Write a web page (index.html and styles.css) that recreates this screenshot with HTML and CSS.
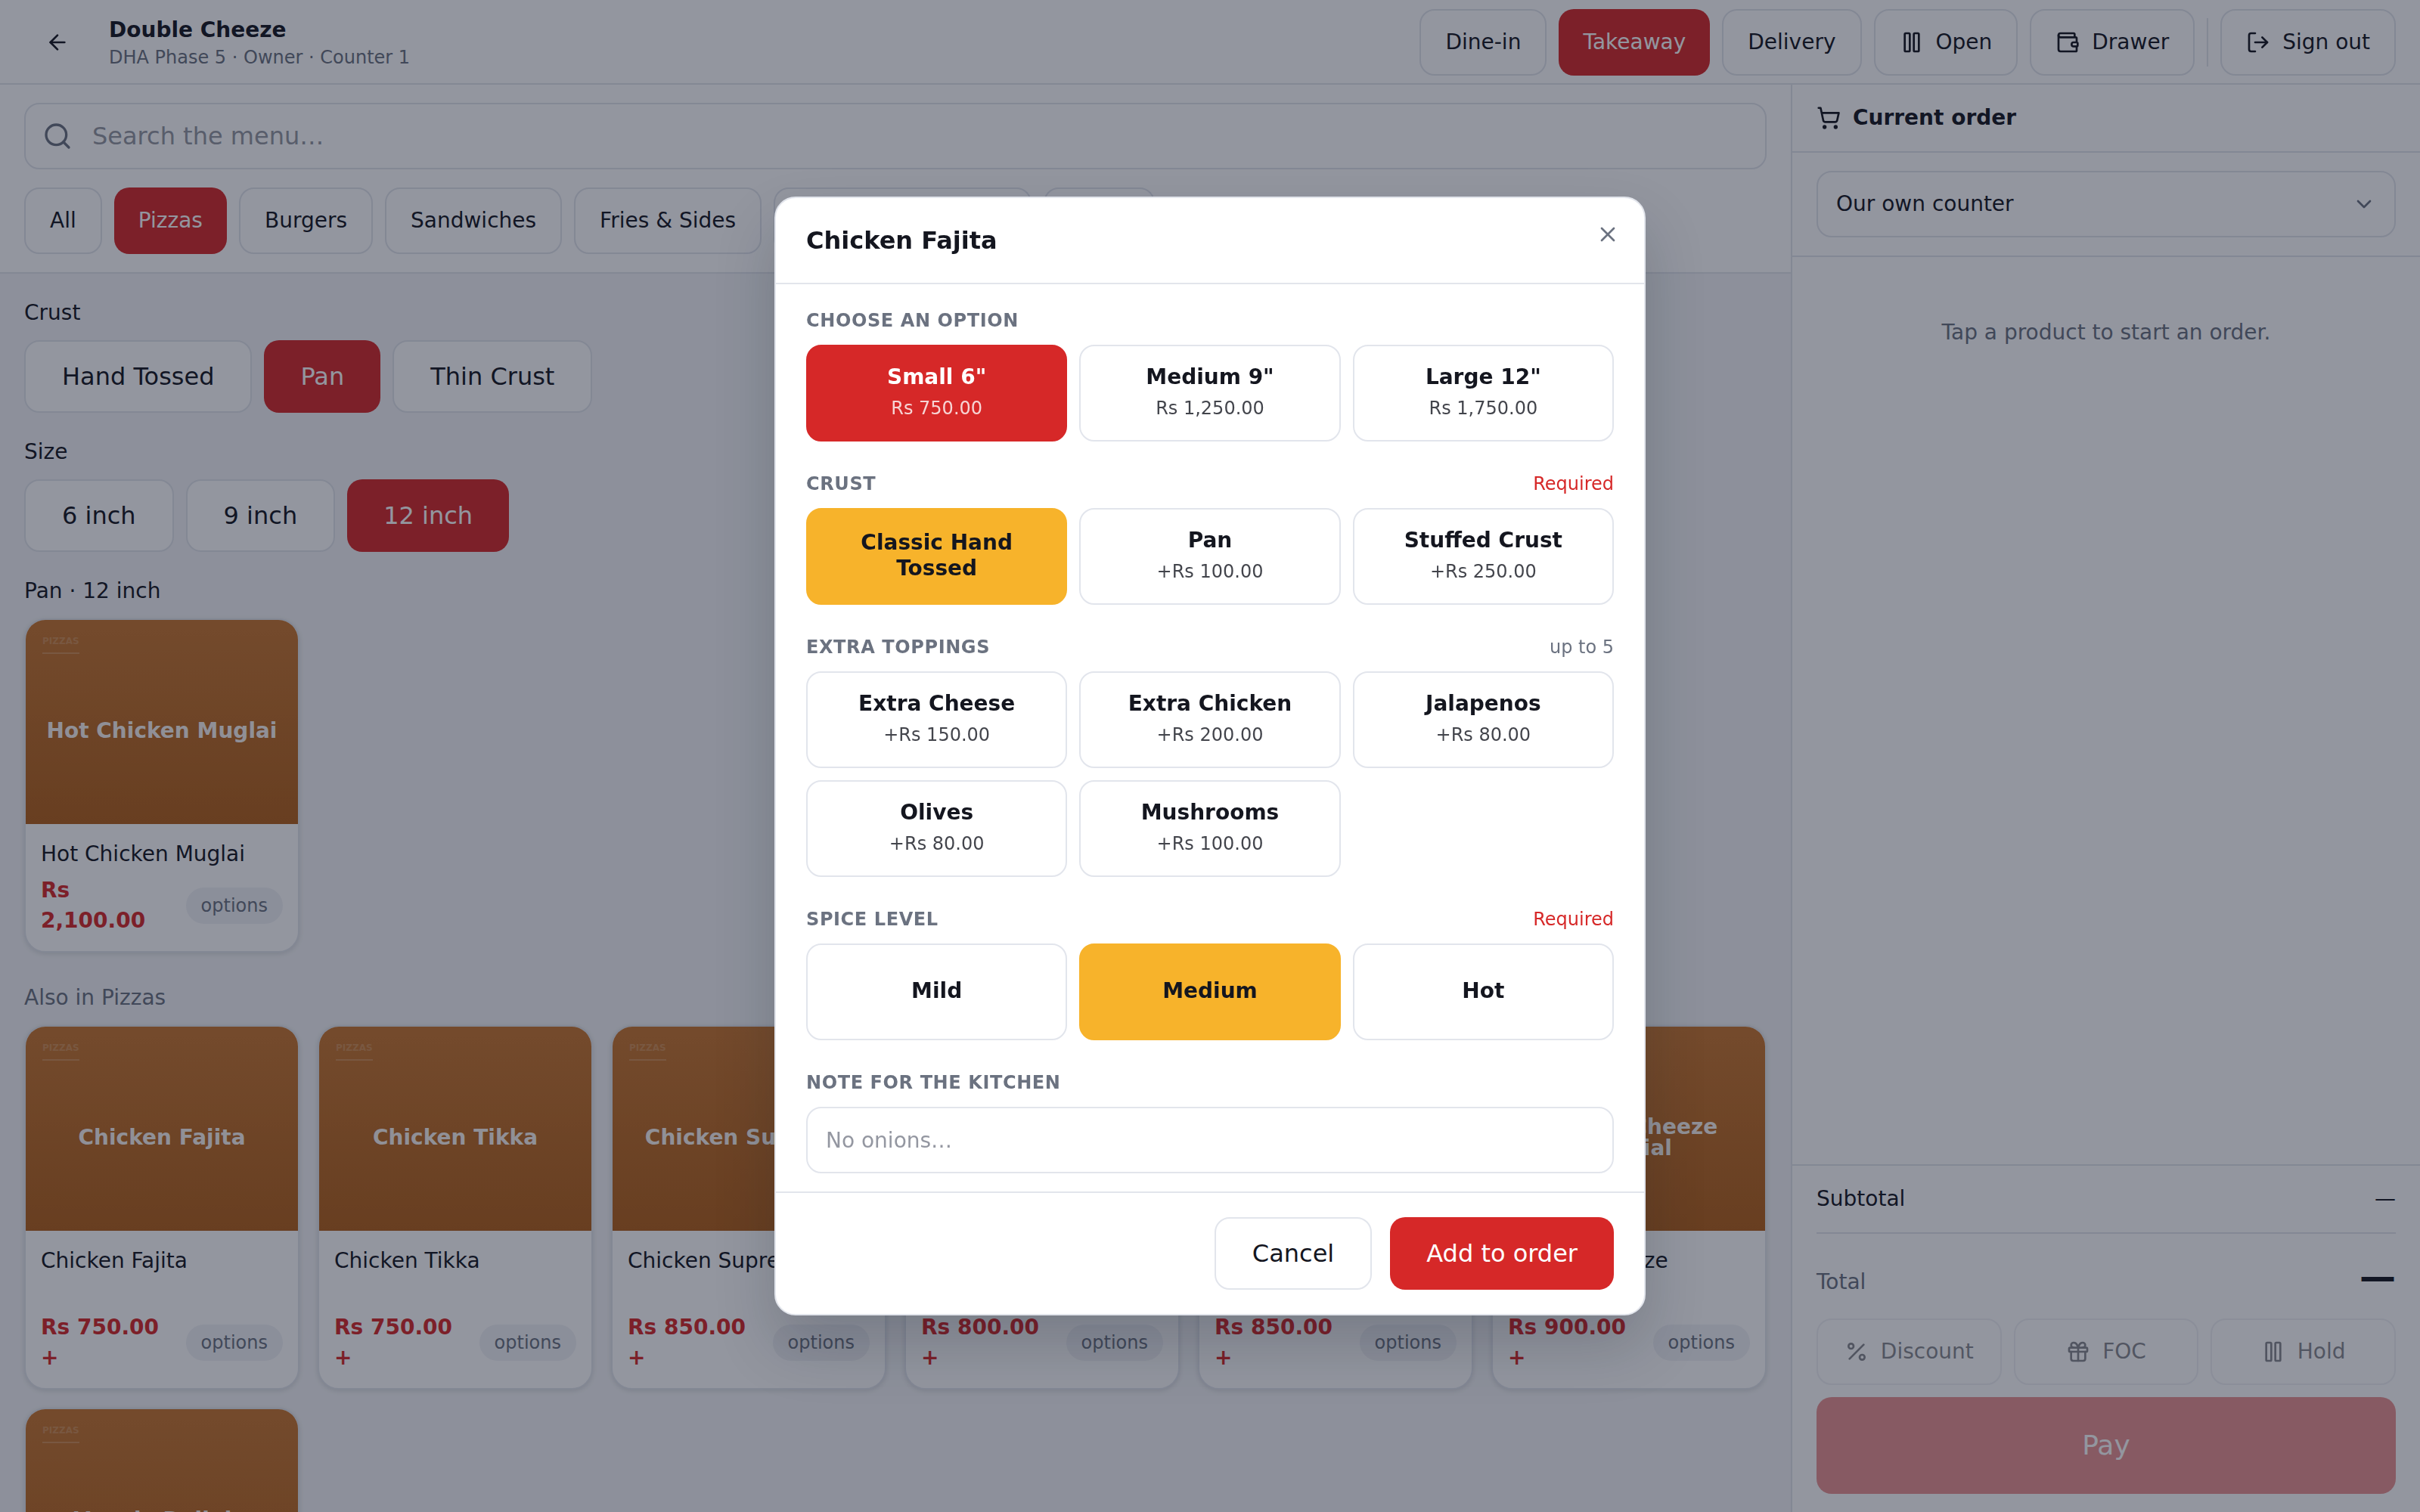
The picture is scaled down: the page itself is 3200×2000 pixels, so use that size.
FILE: index.html
```html
<!DOCTYPE html>
<html lang="en">
<head>
  <meta charset="UTF-8">
  <meta name="viewport" content="width=device-width, initial-scale=1">
  <title>Double Cheeze - Counter</title>
  <link rel="stylesheet" href="styles.css">
</head>
<body>

  <!-- icons -->
  <svg class="sprite" aria-hidden="true">
    <symbol id="i-back" viewBox="0 0 24 24"><path d="m12 19-7-7 7-7"/><path d="M19 12H5"/></symbol>
    <symbol id="i-pause" viewBox="0 0 24 24"><rect x="14" y="3" width="5" height="18" rx="1"/><rect x="5" y="3" width="5" height="18" rx="1"/></symbol>
    <symbol id="i-wallet" viewBox="0 0 24 24"><path d="M19 7V4a1 1 0 0 0-1-1H5a2 2 0 0 0 0 4h15a1 1 0 0 1 1 1v4h-3a2 2 0 0 0 0 4h3a1 1 0 0 0 1-1v-2a1 1 0 0 0-1-1"/><path d="M3 5v14a2 2 0 0 0 2 2h15a1 1 0 0 0 1-1v-4"/></symbol>
    <symbol id="i-out" viewBox="0 0 24 24"><path d="m16 17 5-5-5-5"/><path d="M21 12H9"/><path d="M9 21H5a2 2 0 0 1-2-2V5a2 2 0 0 1 2-2h4"/></symbol>
    <symbol id="i-search" viewBox="0 0 24 24"><circle cx="11" cy="11" r="8"/><path d="m21 21-4.34-4.34"/></symbol>
    <symbol id="i-cart" viewBox="0 0 24 24"><circle cx="8" cy="21" r="1"/><circle cx="19" cy="21" r="1"/><path d="M2.05 2.05h2l2.66 12.42a2 2 0 0 0 2 1.58h9.78a2 2 0 0 0 1.95-1.57l1.65-7.43H5.12"/></symbol>
    <symbol id="i-down" viewBox="0 0 24 24"><path d="m6 9 6 6 6-6"/></symbol>
    <symbol id="i-percent" viewBox="0 0 24 24"><path d="M19 5 5 19"/><circle cx="6.5" cy="6.5" r="2.5"/><circle cx="17.5" cy="17.5" r="2.5"/></symbol>
    <symbol id="i-gift" viewBox="0 0 24 24"><rect x="3" y="8" width="18" height="4" rx="1"/><path d="M12 8v13"/><path d="M19 12v7a2 2 0 0 1-2 2H7a2 2 0 0 1-2-2v-7"/><path d="M7.5 8a2.5 2.5 0 0 1 0-5A4.8 8 0 0 1 12 8a4.8 8 0 0 1 4.5-5 2.5 2.5 0 0 1 0 5"/></symbol>
    <symbol id="i-close" viewBox="0 0 24 24"><path d="M18 6 6 18"/><path d="m6 6 12 12"/></symbol>
  </svg>

  <div class="app">
    <header class="topbar">
      <button class="btn-ghost" aria-label="Back"><svg class="icon"><use href="#i-back"/></svg></button>
      <div class="brand">
        <h1>Double Cheeze</h1>
        <p>DHA Phase 5 · Owner · Counter 1</p>
      </div>
      <div class="actions">
        <button class="btn">Dine-in</button>
        <button class="btn primary">Takeaway</button>
        <button class="btn">Delivery</button>
        <button class="btn"><svg class="icon"><use href="#i-pause"/></svg>Open</button>
        <button class="btn"><svg class="icon"><use href="#i-wallet"/></svg>Drawer</button>
        <span class="divider"></span>
        <button class="btn"><svg class="icon"><use href="#i-out"/></svg>Sign out</button>
      </div>
    </header>

    <div class="columns">
      <main class="menu">
        <div class="filters">
          <div class="search">
            <svg class="icon"><use href="#i-search"/></svg>
            <input type="text" placeholder="Search the menu…" aria-label="Search the menu">
          </div>
          <nav class="row">
            <button class="btn">All</button>
            <button class="btn primary">Pizzas</button>
            <button class="btn">Burgers</button>
            <button class="btn">Sandwiches</button>
            <button class="btn">Fries &amp; Sides</button>
            <button class="btn">Appetizers &amp; Wings</button>
            <button class="btn">Deals</button>
          </nav>
        </div>

        <div class="products">
          <section>
            <h2>Crust</h2>
            <div class="row">
              <button class="btn large">Hand Tossed</button>
              <button class="btn large primary">Pan</button>
              <button class="btn large">Thin Crust</button>
            </div>
          </section>
          <section>
            <h2>Size</h2>
            <div class="row">
              <button class="btn large">6 inch</button>
              <button class="btn large">9 inch</button>
              <button class="btn large primary">12 inch</button>
            </div>
          </section>
          <section>
            <h2>Pan · 12 inch</h2>
            <div class="grid">
              <button class="card">
                <span class="tile"><span class="tag">PIZZAS</span><span class="tile-name">Hot Chicken Muglai</span></span>
                <span class="card-body">
                  <span class="name">Hot Chicken Muglai</span>
                  <span class="card-foot"><span class="price">Rs 2,100.00</span><span class="pill">options</span></span>
                </span>
              </button>
            </div>
          </section>
          <section class="also">
            <h2>Also in Pizzas</h2>
            <div class="grid">
              <button class="card">
                <span class="tile"><span class="tag">PIZZAS</span><span class="tile-name">Chicken Fajita</span></span>
                <span class="card-body">
                  <span class="name">Chicken Fajita</span>
                  <span class="card-foot"><span class="price">Rs 750.00 +</span><span class="pill">options</span></span>
                </span>
              </button>
              <button class="card">
                <span class="tile"><span class="tag">PIZZAS</span><span class="tile-name">Chicken Tikka</span></span>
                <span class="card-body">
                  <span class="name">Chicken Tikka</span>
                  <span class="card-foot"><span class="price">Rs 750.00 +</span><span class="pill">options</span></span>
                </span>
              </button>
              <button class="card">
                <span class="tile"><span class="tag">PIZZAS</span><span class="tile-name">Chicken Supreme</span></span>
                <span class="card-body">
                  <span class="name">Chicken Supreme</span>
                  <span class="card-foot"><span class="price">Rs 850.00 +</span><span class="pill">options</span></span>
                </span>
              </button>
              <button class="card">
                <span class="tile"><span class="tag">PIZZAS</span><span class="tile-name">Cheese Lover</span></span>
                <span class="card-body">
                  <span class="name">Cheese Lover</span>
                  <span class="card-foot"><span class="price">Rs 800.00 +</span><span class="pill">options</span></span>
                </span>
              </button>
              <button class="card">
                <span class="tile"><span class="tag">PIZZAS</span><span class="tile-name">Pepperoni</span></span>
                <span class="card-body">
                  <span class="name">Pepperoni</span>
                  <span class="card-foot"><span class="price">Rs 850.00 +</span><span class="pill">options</span></span>
                </span>
              </button>
              <button class="card">
                <span class="tile"><span class="tag">PIZZAS</span><span class="tile-name">Double Cheeze Special</span></span>
                <span class="card-body">
                  <span class="name">Double Cheeze Special</span>
                  <span class="card-foot"><span class="price">Rs 900.00 +</span><span class="pill">options</span></span>
                </span>
              </button>
              <button class="card">
                <span class="tile"><span class="tag">PIZZAS</span><span class="tile-name">Veggie Delight</span></span>
                <span class="card-body">
                  <span class="name">Veggie Delight</span>
                  <span class="card-foot"><span class="price">Rs 700.00 +</span><span class="pill">options</span></span>
                </span>
              </button>
            </div>
          </section>
        </div>
      </main>

      <aside class="order">
        <h2 class="order-title"><svg class="icon"><use href="#i-cart"/></svg>Current order</h2>
        <div class="channel">
          <div class="select">
            <select aria-label="Order channel">
              <option>Our own counter</option>
            </select>
            <svg class="icon"><use href="#i-down"/></svg>
          </div>
        </div>
        <p class="empty">Tap a product to start an order.</p>
        <div class="totals">
          <div class="subtotal"><span>Subtotal</span><span>—</span></div>
          <div class="total"><span>Total</span><strong>—</strong></div>
          <div class="order-actions">
            <button class="btn" disabled><svg class="icon"><use href="#i-percent"/></svg>Discount</button>
            <button class="btn" disabled><svg class="icon"><use href="#i-gift"/></svg>FOC</button>
            <button class="btn" disabled><svg class="icon"><use href="#i-pause"/></svg>Hold</button>
          </div>
          <button class="btn primary pay" disabled>Pay</button>
        </div>
      </aside>
    </div>
  </div>

  <!-- product options dialog -->
  <div class="overlay">
    <div class="modal" role="dialog" aria-modal="true" aria-labelledby="modalTitle">
      <div class="modal-head">
        <h2 id="modalTitle">Chicken Fajita</h2>
        <button class="close" aria-label="Close"><svg class="icon"><use href="#i-close"/></svg></button>
      </div>
      <div class="modal-body">
        <section>
          <div class="group-head"><h3>CHOOSE AN OPTION</h3></div>
          <div class="options">
            <button class="option red"><b>Small 6"</b><small>Rs 750.00</small></button>
            <button class="option"><b>Medium 9"</b><small>Rs 1,250.00</small></button>
            <button class="option"><b>Large 12"</b><small>Rs 1,750.00</small></button>
          </div>
        </section>
        <section>
          <div class="group-head"><h3>CRUST</h3><span class="required">Required</span></div>
          <div class="options">
            <button class="option amber"><b>Classic Hand Tossed</b></button>
            <button class="option"><b>Pan</b><small>+Rs 100.00</small></button>
            <button class="option"><b>Stuffed Crust</b><small>+Rs 250.00</small></button>
          </div>
        </section>
        <section>
          <div class="group-head"><h3>EXTRA TOPPINGS</h3><span>up to 5</span></div>
          <div class="options">
            <button class="option"><b>Extra Cheese</b><small>+Rs 150.00</small></button>
            <button class="option"><b>Extra Chicken</b><small>+Rs 200.00</small></button>
            <button class="option"><b>Jalapenos</b><small>+Rs 80.00</small></button>
            <button class="option"><b>Olives</b><small>+Rs 80.00</small></button>
            <button class="option"><b>Mushrooms</b><small>+Rs 100.00</small></button>
          </div>
        </section>
        <section>
          <div class="group-head"><h3>SPICE LEVEL</h3><span class="required">Required</span></div>
          <div class="options">
            <button class="option"><b>Mild</b></button>
            <button class="option amber"><b>Medium</b></button>
            <button class="option"><b>Hot</b></button>
          </div>
        </section>
        <section>
          <div class="group-head"><label for="note">NOTE FOR THE KITCHEN</label></div>
          <input class="note" type="text" id="note" placeholder="No onions…">
        </section>
      </div>
      <div class="modal-foot">
        <button class="btn large">Cancel</button>
        <button class="btn large primary">Add to order</button>
      </div>
    </div>
  </div>

</body>
</html>
```
FILE: styles.css
```css
* {
  box-sizing: border-box;
}
body {
  margin: 0;
  font-family: "DejaVu Sans", sans-serif;
  font-size: 28px;
  line-height: 40px;
  color: #14161f;
  background: #f4f5f7;
}
h1, h2, h3, p {
  margin: 0;
  font-size: 28px;
  font-weight: normal;
}
button, input, select {
  font: inherit;
  color: inherit;
  margin: 0;
}
button {
  cursor: pointer;
}
input::placeholder {
  color: #9497a1;
  opacity: 1;
}
.sprite {
  display: none;
}
.icon {
  width: 32px;
  height: 32px;
  flex-shrink: 0;
  fill: none;
  stroke: currentColor;
  stroke-width: 2;
  stroke-linecap: round;
  stroke-linejoin: round;
}

/* buttons */
.btn {
  display: inline-flex;
  align-items: center;
  justify-content: center;
  gap: 16px;
  height: 88px;
  padding: 0 32px;
  background: #fff;
  border: 2px solid #e2e5ec;
  border-radius: 20px;
  white-space: nowrap;
}
.btn.large {
  height: 96px;
  padding: 0 48px;
  font-size: 32px;
}
.btn.primary {
  background: #d62828;
  border: none;
  color: #fff;
}
.btn:disabled {
  opacity: 0.5;
  cursor: default;
}
.btn-ghost {
  display: flex;
  align-items: center;
  justify-content: center;
  width: 88px;
  height: 88px;
  padding: 0;
  background: none;
  border: none;
}

/* page */
.app {
  display: flex;
  flex-direction: column;
  height: 100vh;
  overflow: hidden;
}
.topbar {
  display: flex;
  align-items: center;
  gap: 24px;
  padding: 12px 32px 10px;
  background: #fff;
  border-bottom: 2px solid #e2e5ec;
}
.brand {
  flex: 1;
}
.brand h1 {
  font-weight: bold;
}
.brand p {
  font-size: 24px;
  line-height: 32px;
  color: #6b7280;
}
.actions, .row {
  display: flex;
  align-items: center;
  gap: 16px;
}
.divider {
  width: 2px;
  height: 64px;
  background: #e2e5ec;
}
.columns {
  display: flex;
  flex: 1;
  min-height: 0;
}
.menu {
  display: flex;
  flex-direction: column;
  flex: 1;
  min-width: 0;
}
.filters {
  display: flex;
  flex-direction: column;
  gap: 24px;
  padding: 24px 32px;
  background: #fff;
  border-bottom: 2px solid #e2e5ec;
}
.search {
  position: relative;
}
.search .icon {
  position: absolute;
  left: 24px;
  top: 24px;
  width: 40px;
  height: 40px;
  color: #6b7280;
}
.search input, .note, .select select {
  display: block;
  width: 100%;
  height: 88px;
  padding: 0 24px;
  background: #fff;
  border: 2px solid #e2e5ec;
  border-radius: 20px;
}
.search input {
  padding-left: 88px;
  font-size: 32px;
}
.products {
  display: flex;
  flex-direction: column;
  gap: 32px;
  flex: 1;
  min-height: 0;
  padding: 32px;
  overflow: hidden;
}
.products h2 {
  margin-bottom: 16px;
}
.also {
  margin-top: 8px;
}
.also h2 {
  color: #6b7280;
}

/* product cards */
.grid {
  display: grid;
  grid-template-columns: repeat(auto-fill, minmax(340px, 1fr));
  gap: 24px;
}
.card {
  display: flex;
  flex-direction: column;
  padding: 0;
  background: #fff;
  border: 2px solid #e2e5ec;
  border-radius: 28px;
  box-shadow: 0 2px 6px rgba(15, 23, 42, 0.12);
  overflow: hidden;
  text-align: left;
}
.tile {
  display: flex;
  flex-direction: column;
  align-items: flex-start;
  width: 100%;
  aspect-ratio: 4 / 3;
  padding: 20px 22px 22px;
  background: linear-gradient(#c7762f, #b1601a);
  font-weight: bold;
}
.tag {
  padding-bottom: 7px;
  border-bottom: 2px solid rgba(255, 255, 255, 0.2);
  font-size: 12px;
  line-height: 16px;
  color: rgba(255, 255, 255, 0.2);
}
.tile-name {
  display: flex;
  align-items: center;
  justify-content: center;
  flex: 1;
  width: 100%;
  line-height: 28px;
  text-align: center;
  color: rgba(255, 255, 255, 0.95);
}
.card-body {
  display: flex;
  flex-direction: column;
  justify-content: space-between;
  gap: 8px;
  flex: 1;
  width: 100%;
  padding: 20px;
}
.card-foot {
  display: flex;
  align-items: center;
  justify-content: space-between;
  gap: 16px;
}
.price {
  font-weight: bold;
  color: #d62828;
}
.pill {
  flex-shrink: 0;
  padding: 8px 20px;
  background: #f1f2f6;
  border-radius: 24px;
  font-size: 24px;
  line-height: 32px;
  color: #6b7280;
}

/* order panel */
.order {
  display: flex;
  flex-direction: column;
  width: 26%;
  background: #fff;
  border-left: 2px solid #e2e5ec;
}
.order-title {
  display: flex;
  align-items: center;
  gap: 16px;
  padding: 24px 32px;
  border-bottom: 2px solid #e2e5ec;
  font-weight: bold;
}
.channel {
  padding: 24px 32px;
  border-bottom: 2px solid #e2e5ec;
}
.select {
  position: relative;
}
.select select {
  appearance: none;
}
.select .icon {
  position: absolute;
  right: 26px;
  top: 28px;
  color: #6b7280;
  pointer-events: none;
}
.empty {
  flex: 1;
  padding-top: 80px;
  text-align: center;
  color: #6b7280;
}
.totals {
  padding: 24px 32px;
  border-top: 2px solid #e2e5ec;
}
.subtotal, .total {
  display: flex;
  align-items: baseline;
  justify-content: space-between;
}
.subtotal {
  padding-bottom: 24px;
  border-bottom: 2px solid #e2e5ec;
}
.total {
  padding: 24px 0;
  color: #6b7280;
}
.total strong {
  font-size: 48px;
  line-height: 64px;
  color: #14161f;
}
.order-actions {
  display: grid;
  grid-template-columns: repeat(3, 1fr);
  gap: 16px;
  margin-bottom: 16px;
}
.btn.pay {
  width: 100%;
  height: 128px;
  font-size: 36px;
}

/* modal */
.overlay {
  position: fixed;
  inset: 0;
  display: flex;
  align-items: center;
  justify-content: center;
  background: rgba(15, 23, 42, 0.45);
}
.modal {
  width: 1152px;
  max-width: 90%;
  background: #fff;
  border: 2px solid #e2e5ec;
  border-radius: 28px;
  box-shadow: 0 40px 80px rgba(15, 23, 42, 0.2);
}
.modal-head {
  display: flex;
  align-items: flex-start;
  justify-content: space-between;
  padding: 32px 32px 32px 40px;
  border-bottom: 2px solid #e2e5ec;
}
.modal-head h2 {
  font-size: 32px;
  line-height: 48px;
  font-weight: bold;
}
.close {
  display: flex;
  padding: 0;
  background: none;
  border: none;
  color: #6b7280;
}
.modal-body {
  display: flex;
  flex-direction: column;
  gap: 40px;
  padding: 32px 40px 24px;
}
.group-head {
  display: flex;
  justify-content: space-between;
  margin-bottom: 16px;
  font-size: 24px;
  line-height: 32px;
  color: #6b7280;
}
.group-head h3, .group-head label {
  font-size: 24px;
  font-weight: bold;
  letter-spacing: 0.025em;
}
.group-head .required {
  color: #d62828;
}
.options {
  display: grid;
  grid-template-columns: repeat(3, 1fr);
  gap: 16px;
}
.option {
  display: flex;
  flex-direction: column;
  align-items: center;
  justify-content: center;
  gap: 8px;
  height: 128px;
  padding: 0 24px 2px;
  background: #fff;
  border: 2px solid #e2e5ec;
  border-radius: 20px;
  line-height: 34px;
}
.option small {
  font-size: 24px;
  line-height: 32px;
  opacity: 0.8;
}
.option.red {
  background: #d62828;
  border-color: #d62828;
  color: #fff;
}
.option.amber {
  background: #f7b32b;
  border-color: #f7b32b;
}
.modal-foot {
  display: flex;
  justify-content: flex-end;
  gap: 24px;
  padding: 32px 40px;
  border-top: 2px solid #e2e5ec;
}
```
